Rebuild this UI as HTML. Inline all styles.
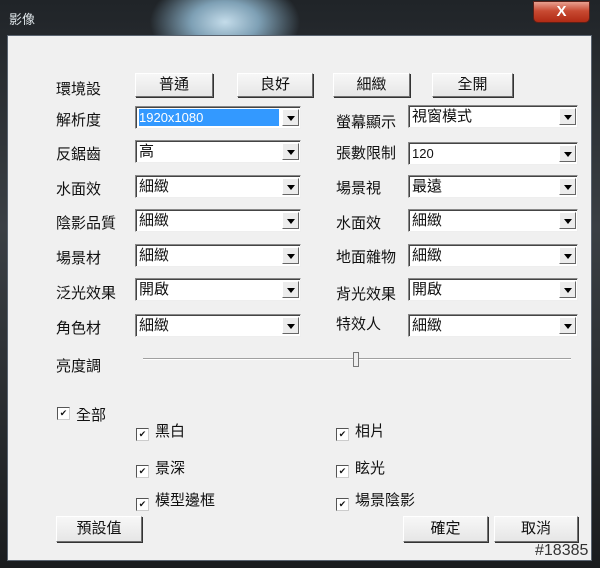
<!DOCTYPE html>
<html><head><meta charset="utf-8"><style>
*{margin:0;padding:0;box-sizing:border-box}
body{width:600px;height:568px;overflow:hidden;position:relative;font-family:"Liberation Sans","Noto Sans CJK TC",sans-serif;font-size:15px;color:#111;
background:radial-gradient(ellipse 75px 45px at 225px 22px,#c4dcea 0%,#7ea0b5 45%,rgba(0,0,0,0) 100%),linear-gradient(#202428,#3a3f44 40%,#1a1c1e);}
.a{position:absolute;white-space:nowrap}
#panel{position:absolute;left:7px;top:35px;width:585px;height:526px;background:#f0f0f0;border:1px solid #5a6470}
#close{position:absolute;left:533px;top:1px;width:57px;height:22px;border-radius:0 0 5px 5px;background:linear-gradient(#e8a090,#c84a32 45%,#b02a14);border:1px solid #5a2018;color:#fff;font-weight:bold;font-size:15px;text-align:center;line-height:20px}
.btn{position:absolute;height:24px;background:linear-gradient(#f7f7f7,#e6e6e6);border:1px solid;border-color:#fff #707070 #707070 #fff;box-shadow:1px 1px 0 #333;text-align:center;line-height:22px}
.cb{position:absolute;height:23px;background:#fff;border:1px solid;border-color:#888 #eee #eee #888;box-shadow:inset 1px 1px 0 #444;padding-left:3px;line-height:21px}
.cb .ar{position:absolute;right:1px;top:2px;width:17px;height:17px;background:#ececec;border:1px solid;border-color:#fff #666 #666 #fff}
.cb .ar:after{content:"";position:absolute;left:4px;top:6px;border-left:4px solid transparent;border-right:4px solid transparent;border-top:5px solid #000}
.chk{position:absolute;width:13px;height:13px;background:#fff;border:1px solid;border-color:#555 #ccc #ccc #555;font-size:9px;line-height:11px;text-align:center}
</style></head><body>
<div class="a" style="left:9px;top:9px;color:#dfe6ea;font-size:13px">影像</div>
<div id="close">X</div>
<div id="panel"></div>

<div class="a" style="left:56px;top:78px">環境設</div>
<div class="btn" style="left:135px;top:73px;width:78px">普通</div>
<div class="btn" style="left:237px;top:73px;width:76px">良好</div>
<div class="btn" style="left:333px;top:73px;width:77px">細緻</div>
<div class="btn" style="left:432px;top:73px;width:81px">全開</div>

<div class="a" style="left:56px;top:109px">解析度</div>
<div class="a" style="left:56px;top:143px">反鋸齒</div>
<div class="a" style="left:56px;top:178px">水面效</div>
<div class="a" style="left:56px;top:212px">陰影品質</div>
<div class="a" style="left:56px;top:247px">場景材</div>
<div class="a" style="left:56px;top:282px">泛光效果</div>
<div class="a" style="left:56px;top:317px">角色材</div>
<div class="a" style="left:56px;top:355px">亮度調</div>

<div class="cb" style="left:135px;top:106px;width:166px"><span style="background:#3399ff;color:#fff;display:inline-block;width:140px;line-height:17px;margin-top:1px;font-size:13px">1920x1080</span><div class="ar"></div></div>
<div class="cb" style="left:135px;top:140px;width:166px">高<div class="ar"></div></div>
<div class="cb" style="left:135px;top:175px;width:166px">細緻<div class="ar"></div></div>
<div class="cb" style="left:135px;top:209px;width:166px">細緻<div class="ar"></div></div>
<div class="cb" style="left:135px;top:244px;width:166px">細緻<div class="ar"></div></div>
<div class="cb" style="left:135px;top:278px;width:166px">開啟<div class="ar"></div></div>
<div class="cb" style="left:135px;top:314px;width:166px">細緻<div class="ar"></div></div>

<div class="a" style="left:336px;top:111px">螢幕顯示</div>
<div class="a" style="left:336px;top:142px">張數限制</div>
<div class="a" style="left:336px;top:177px">場景視</div>
<div class="a" style="left:336px;top:212px">水面效</div>
<div class="a" style="left:336px;top:246px">地面雜物</div>
<div class="a" style="left:336px;top:283px">背光效果</div>
<div class="a" style="left:336px;top:313px">特效人</div>

<div class="cb" style="left:408px;top:105px;width:170px">視窗模式<div class="ar"></div></div>
<div class="cb" style="left:408px;top:142px;width:170px"><span style="font-size:13px">120</span><div class="ar"></div></div>
<div class="cb" style="left:408px;top:175px;width:170px">最遠<div class="ar"></div></div>
<div class="cb" style="left:408px;top:209px;width:170px">細緻<div class="ar"></div></div>
<div class="cb" style="left:408px;top:244px;width:170px">細緻<div class="ar"></div></div>
<div class="cb" style="left:408px;top:278px;width:170px">開啟<div class="ar"></div></div>
<div class="cb" style="left:408px;top:314px;width:170px">細緻<div class="ar"></div></div>

<div class="a" style="left:143px;top:358px;width:428px;height:2px;background:#a0a0a0;border-bottom:1px solid #fff"></div>
<div class="a" style="left:353px;top:352px;width:6px;height:15px;background:#eee;border:1px solid #777"></div>

<div class="chk" style="left:57px;top:407px">✔</div><div class="a" style="left:76px;top:404px">全部</div>
<div class="chk" style="left:136px;top:428px">✔</div><div class="a" style="left:155px;top:420px">黑白</div>
<div class="chk" style="left:136px;top:465px">✔</div><div class="a" style="left:155px;top:457px">景深</div>
<div class="chk" style="left:136px;top:498px">✔</div><div class="a" style="left:155px;top:489px">模型邊框</div>
<div class="chk" style="left:336px;top:428px">✔</div><div class="a" style="left:355px;top:420px">相片</div>
<div class="chk" style="left:336px;top:465px">✔</div><div class="a" style="left:355px;top:457px">眩光</div>
<div class="chk" style="left:336px;top:498px">✔</div><div class="a" style="left:355px;top:489px">場景陰影</div>

<div class="btn" style="left:56px;top:516px;width:86px;height:26px;line-height:24px">預設值</div>
<div class="btn" style="left:403px;top:516px;width:85px;height:26px;line-height:24px">確定</div>
<div class="btn" style="left:494px;top:516px;width:84px;height:26px;line-height:24px">取消</div>
<div class="a" style="left:535px;top:542px;color:#333;font-size:16px">#18385</div>
</body></html>
